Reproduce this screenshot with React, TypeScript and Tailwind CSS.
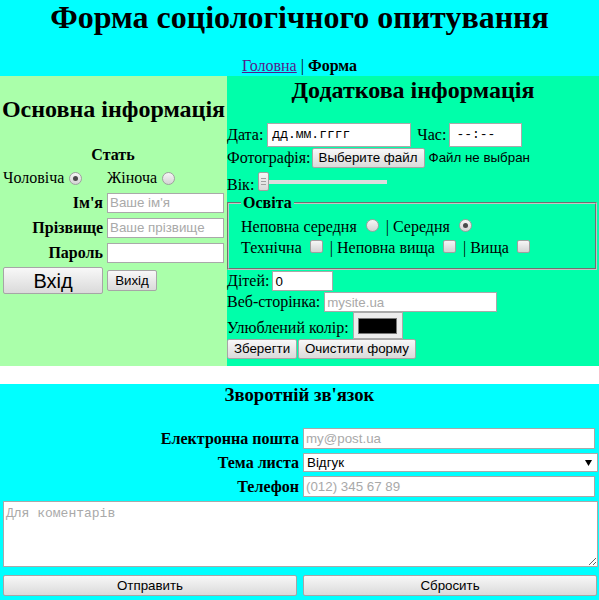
import React from "react";

const sans = "font-['Liberation_Sans',Arial,sans-serif] text-[13.33px]";

function Radio({ checked, className = "" }: { checked?: boolean; className?: string }) {
  return (
    <span
      className={
        "inline-block align-baseline mt-[3px] w-[13px] h-[13px] rounded-full border border-[#a0a0a0] bg-linear-to-b from-[#f6f6f6] to-[#d4d4d4] " +
        className
      }
    >
      {checked && <span className="block w-[5px] h-[5px] rounded-full bg-[#4a4a4a] mx-auto mt-[3px]" />}
    </span>
  );
}

function Check({ className = "" }: { className?: string }) {
  return (
    <span
      className={
        "inline-block align-baseline mt-[3px] w-[13px] h-[13px] rounded-[2px] border border-[#a0a0a0] bg-linear-to-b from-[#f6f6f6] to-[#d4d4d4] " +
        className
      }
    />
  );
}

function Btn({ children, className = "" }: { children: React.ReactNode; className?: string }) {
  return (
    <button
      type="button"
      className={
        "flex items-center justify-center border border-[#a6a6a6] rounded-[2px] bg-linear-to-b from-[#f8f8f8] to-[#dadada] text-black font-['Liberation_Sans',Arial,sans-serif] " +
        className
      }
    >
      {children}
    </button>
  );
}

function Field({ placeholder, value, className = "" }: { placeholder?: string; value?: string; className?: string }) {
  return (
    <input
      readOnly
      placeholder={placeholder}
      defaultValue={value}
      className={
        "border border-[#a9a9a9] bg-white px-[2px] text-black placeholder:text-[#a9a9a9] outline-none " + sans + " " + className
      }
    />
  );
}

export default function App() {
  return (
    <div className="font-['Liberation_Serif','Times_New_Roman',serif] text-[16px] text-black bg-white">
      <header className="h-[76px] bg-[#00ffff] text-center">
        <h1 className="text-[32px] font-bold leading-[35px]">Форма соціологічного опитування</h1>
        <nav className="mt-[22px] leading-[18px]">
          <a className="text-[#551a8b] underline">Головна</a> | <b>Форма</b>
        </nav>
      </header>

      <div className="flex h-[290px]">
        <section className="w-[227px] bg-[#aaffaa]">
          <h2 className="mt-[19px] text-[24px] font-bold leading-[28px] text-center">Основна інформація</h2>
          <div className="mt-[21px] pl-[3px] grid grid-cols-[100px_116px] gap-x-[4px]">
            <div className="col-span-2 h-[22px] flex items-center justify-center font-bold">Стать</div>
            <div className="h-[24px] flex items-center">
              Чоловіча
              <Radio checked className="ml-[5px] !mt-0" />
            </div>
            <div className="h-[24px] flex items-center">
              Жіноча
              <Radio className="ml-[5px] !mt-0" />
            </div>

            <div className="h-[25px] flex items-center justify-end font-bold">Ім'я</div>
            <div className="h-[25px] flex items-center">
              <Field placeholder="Ваше ім'я" className="w-[117px] h-[20px]" />
            </div>
            <div className="h-[25px] flex items-center justify-end font-bold">Прізвище</div>
            <div className="h-[25px] flex items-center">
              <Field placeholder="Ваше прізвище" className="w-[117px] h-[20px]" />
            </div>
            <div className="h-[25px] flex items-center justify-end font-bold">Пароль</div>
            <div className="h-[25px] flex items-center">
              <Field className="w-[117px] h-[20px]" />
            </div>

            <div className="h-[31px] flex items-center">
              <Btn className="w-[100px] h-[27px] text-[20px]">Вхід</Btn>
            </div>
            <div className="h-[31px] flex items-center">
              <Btn className="w-[50px] h-[21px] text-[13.33px]">Вихід</Btn>
            </div>
          </div>
        </section>

        <section className="flex-1 bg-[#00ffaa]">
          <h2 className="text-[24px] font-bold leading-[28px] text-center">Додаткова інформація</h2>

          <div className="mt-[19px] h-[24px] flex items-center">
            <span>Дата:</span>
            <span className="ml-[4px] w-[144px] h-[24px] flex items-center pl-[4px] border border-[#a9a9a9] bg-white font-['Liberation_Mono',monospace] text-[13px]">
              дд.мм.гггг
            </span>
            <span className="ml-[6px]">Час:</span>
            <span className="ml-[3px] w-[73px] h-[24px] flex items-center pl-[6px] border border-[#a9a9a9] bg-white font-['Liberation_Mono',monospace] text-[13px]">
              --:--
            </span>
          </div>

          <div className="mt-[1px] h-[20px] flex items-center">
            <span>Фотографія:</span>
            <Btn className="ml-[1px] w-[113px] h-[20px] text-[13.33px]">Выберите файл</Btn>
            <span className={"ml-[4px] " + sans}>Файл не выбран</span>
          </div>

          <div className="mt-[3px] h-[23px] flex items-end">
            <span className="leading-[18px]">Вік:</span>
            <div className="ml-[4px] mb-[3px] w-[129px] h-[19px] flex items-center">
              <div className="w-[11px] h-[19px] rounded-[2px] border border-[#a0a0a0] bg-linear-to-b from-[#f6f6f6] to-[#d8d8d8] flex flex-col items-center justify-center gap-[2px]">
                <div className="w-[5px] h-px bg-[#a0a0a0]" />
                <div className="w-[5px] h-px bg-[#a0a0a0]" />
                <div className="w-[5px] h-px bg-[#a0a0a0]" />
              </div>
              <div className="flex-1 h-[4px] bg-[#dddddd]" />
            </div>
          </div>

          <fieldset className="mr-[2px] border-2 [border-style:groove] border-[#c4c4c4] px-[12px] pt-[4px] pb-[10px] leading-[21px]">
            <legend className="px-[2px] font-bold leading-[18px]">Освіта</legend>
            <div>
              Неповна середня <Radio className="ml-[5px] mr-[3px]" /> | Середня <Radio checked className="ml-[5px] mr-[3px]" />
            </div>
            <div>
              Технічна <Check className="ml-[4px] mr-[3px]" /> | Неповна вища <Check className="ml-[4px] mr-[3px]" /> | Вища{" "}
              <Check className="ml-[4px] mr-[3px]" />
            </div>
          </fieldset>

          <div className="mt-[1px] h-[20px] flex items-center">
            <span>Дітей:</span>
            <Field value="0" className="ml-[3px] w-[61px] h-[20px]" />
          </div>

          <div className="mt-[1px] h-[20px] flex items-center">
            <span>Веб-сторінка:</span>
            <Field placeholder="mysite.ua" className="ml-[4px] w-[173px] h-[20px]" />
          </div>

          <div className="h-[27px] flex items-end">
            <span className="leading-[18px] mb-[2px]">Улюблений колір:</span>
            <div className="ml-[4px] w-[50px] h-[27px] flex items-center justify-center border border-[#a9a9a9] bg-[#ececec]">
              <div className="w-[39px] h-[16px] bg-black border border-[#777777]" />
            </div>
          </div>

          <div className="h-[20px] flex">
            <Btn className="w-[70px] h-[20px] text-[13.33px]">Зберегти</Btn>
            <Btn className="ml-[1px] w-[118px] h-[20px] text-[13.33px]">Очистити форму</Btn>
          </div>
        </section>
      </div>

      <section className="mt-[18px] h-[216px] bg-[#00ffff]">
        <h3 className="text-[18.72px] font-bold leading-[22px] text-center">Зворотній зв'язок</h3>

        <div className="mt-[22px] h-[21px] flex items-center">
          <span className="w-[299px] text-right font-bold">Електронна пошта</span>
          <Field placeholder="my@post.ua" className="ml-[4px] w-[292px] h-[21px]" />
        </div>

        <div className="mt-[4px] h-[19px] flex items-center">
          <span className="w-[299px] text-right font-bold">Тема листа</span>
          <div className={"ml-[4px] w-[295px] h-[19px] flex items-center justify-between pl-[3px] pr-[5px] border border-[#a9a9a9] bg-white " + sans}>
            <span>Відгук</span>
            <svg width="7" height="7" viewBox="0 0 7 7">
              <polygon points="0,1 7,1 3.5,7" fill="#000" />
            </svg>
          </div>
        </div>

        <div className="mt-[4px] h-[21px] flex items-center">
          <span className="w-[299px] text-right font-bold">Телефон</span>
          <Field placeholder="(012) 345 67 89" className="ml-[4px] w-[292px] h-[21px]" />
        </div>

        <div className="mt-[4px] ml-[3px] h-[66px] w-[595px]">
          <textarea
            readOnly
            placeholder="Для коментарів"
            className="block w-full h-full border border-[#a9a9a9] bg-white px-[2px] py-[2px] font-['Liberation_Mono',monospace] text-[13px] placeholder:text-[#a9a9a9] outline-none resize"
          />
        </div>

        <div className="mt-[8px] h-[21px] flex">
          <Btn className="ml-[3px] w-[294px] h-[21px] text-[13.33px]">Отправить</Btn>
          <Btn className="ml-[6px] w-[294px] h-[21px] text-[13.33px]">Сбросить</Btn>
        </div>
      </section>
    </div>
  );
}
